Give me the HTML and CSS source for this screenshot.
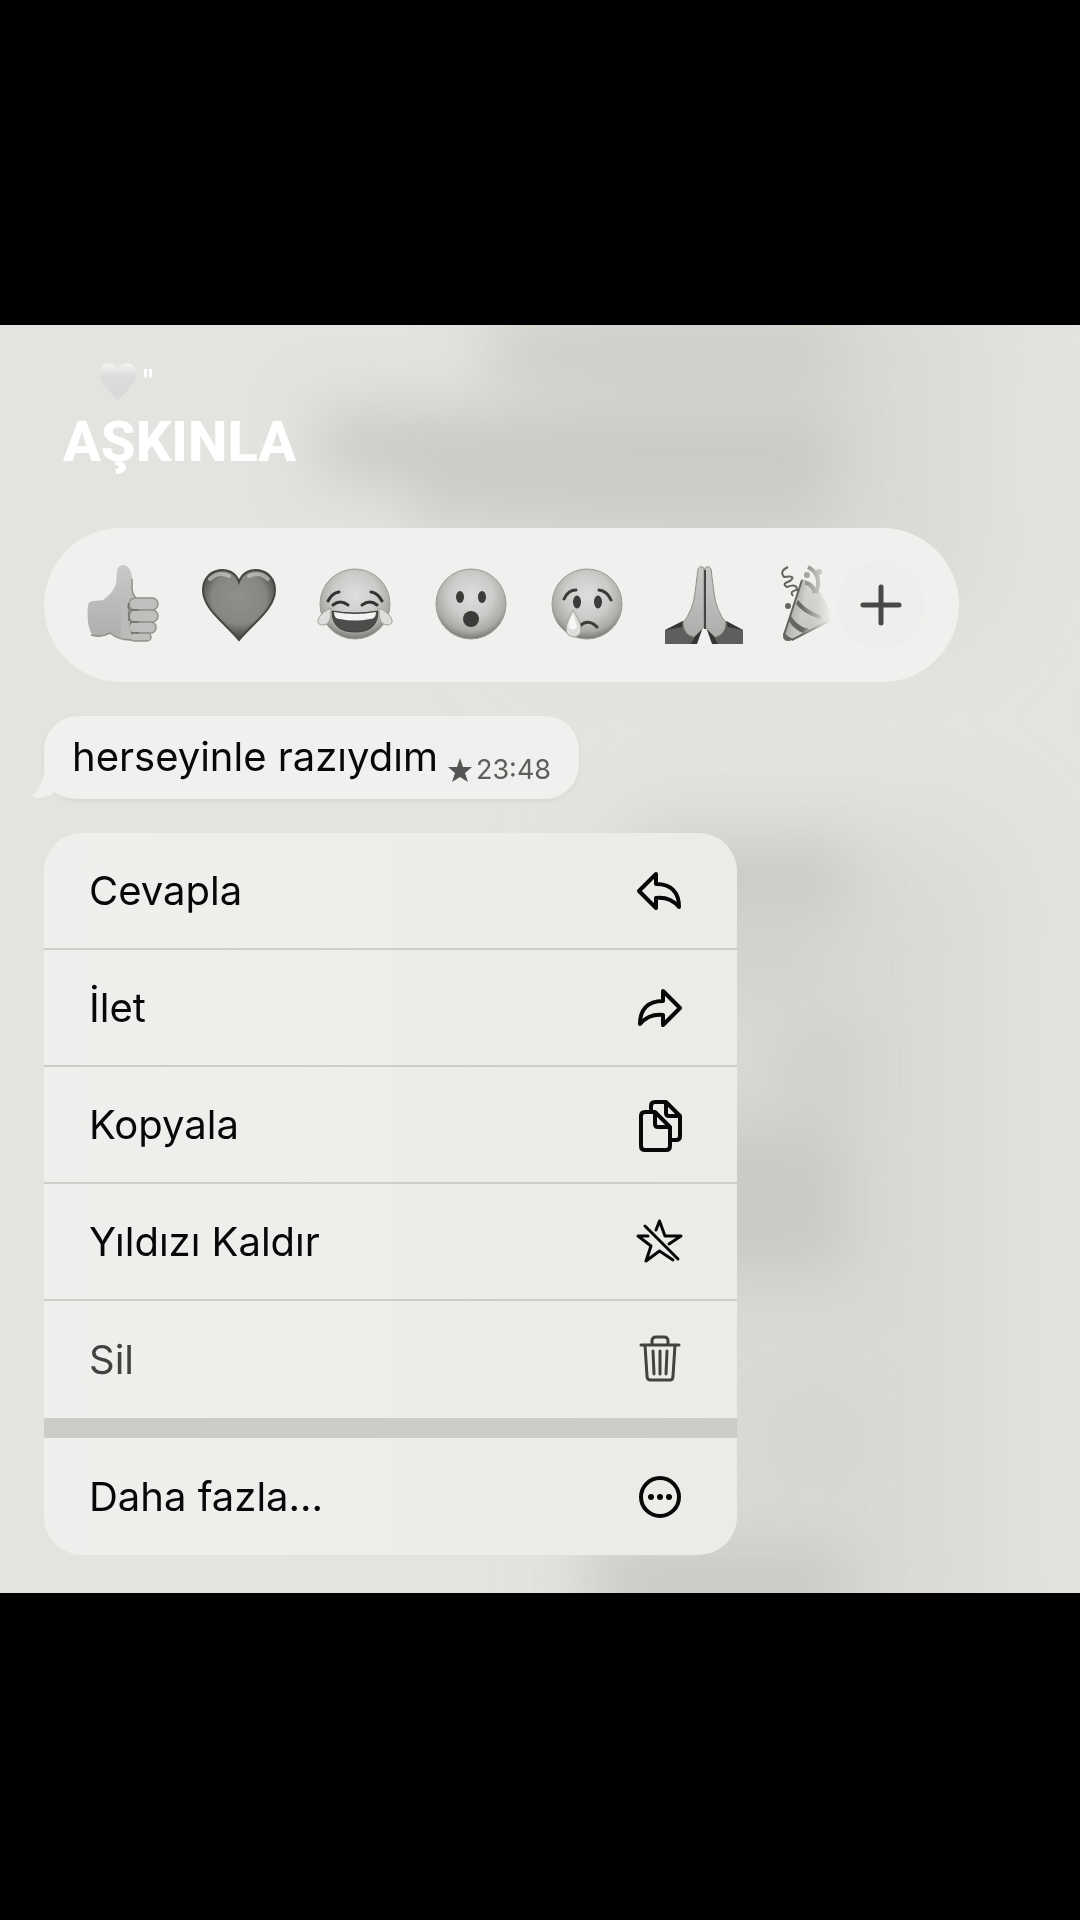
FILE: index.html
```html
<!DOCTYPE html>
<html lang="tr">
<head>
    <meta charset="UTF-8">
    <meta name="viewport" content="width=device-width, initial-scale=1.0">
    <title>AŞKINLA</title>
    <link rel="stylesheet" href="styles.css">
</head>
<body>
    <main class="stage">
        <!-- Blurred chat behind the menu -->
        <svg class="backdrop" viewBox="0 0 1080 1268" preserveAspectRatio="none" aria-hidden="true">
            <defs>
                <filter id="soft" x="-50%" y="-50%" width="200%" height="200%"><feGaussianBlur stdDeviation="30"/></filter>
                <filter id="wide" x="-50%" y="-50%" width="200%" height="200%"><feGaussianBlur stdDeviation="55"/></filter>
            </defs>
            <g filter="url(#wide)" fill="#d9dad5">
                <rect x="540" y="-60" width="440" height="360"/>
                <rect x="620" y="500" width="380" height="860"/>
            </g>
            <g filter="url(#soft)" fill="#c9cac4">
                <rect x="490" y="0" width="350" height="50"/>
                <rect x="320" y="85" width="520" height="70"/>
                <rect x="410" y="150" width="420" height="60" opacity="0.8"/>
                <rect x="640" y="520" width="210" height="70"/>
                <rect x="640" y="620" width="190" height="40" opacity="0.7"/>
                <rect x="780" y="700" width="80" height="80" opacity="0.7"/>
                <rect x="640" y="800" width="210" height="150"/>
                <rect x="780" y="1080" width="70" height="70" opacity="0.4"/>
                <rect x="590" y="1220" width="260" height="80"/>
            </g>
        </svg>

        <div class="caption">
            <div class="caption-quote">
                <svg class="caption-heart" viewBox="0 0 40 40" aria-hidden="true">
                    <defs>
                        <linearGradient id="pale" x1="0" y1="0" x2="0" y2="1">
                            <stop offset="0" stop-color="#f4f4f3"/>
                            <stop offset="0.35" stop-color="#dcdcdc"/>
                            <stop offset="1" stop-color="#d9d9d9"/>
                        </linearGradient>
                    </defs>
                    <path fill="url(#pale)" d="M20 39 C11 30 2 23 2 12 C2 1 15 -1 20 8 C25 -1 38 1 38 12 C38 23 29 30 20 39 Z"/>
                </svg>
                <span>"</span>
            </div>
            <h1 class="caption-title">AŞKINLA</h1>
        </div>

        <div class="reactions">
            <div class="reaction-list">
                <button class="reaction" aria-label="Beğen">
                    <svg viewBox="0 0 80 80">
                        <defs>
                            <linearGradient id="skin" x1="0" y1="0" x2="0" y2="1">
                                <stop offset="0" stop-color="#c9cac8"/>
                                <stop offset="1" stop-color="#adaeab"/>
                            </linearGradient>
                        </defs>
                        <path fill="url(#skin)" d="M5 40 Q6 36 11 36 L20 35 Q30 28 33 19 L34 6 Q35 0 41 0 Q48 2 49 12 L49 22 Q49 28 52 33 L50 75 Q38 76 27 68 Q20 71 10 71 Q3 62 5 40 Z"/>
                        <path fill="none" stroke="#8e8f8b" stroke-width="1.5" d="M49 14 V22 Q49 29 53 33 M8 70 Q18 73 27 68 Q37 76 50 75"/>
                        <g fill="#bfc0bd" stroke="#90918d" stroke-width="1.5">
                            <rect x="46" y="33" width="29" height="12" rx="6"/>
                            <rect x="46" y="45" width="29" height="12" rx="6"/>
                            <rect x="46" y="57" width="27" height="11" rx="5"/>
                            <rect x="47" y="68" width="21" height="8" rx="4"/>
                        </g>
                        <path fill="#bbbcb9" d="M38 35 L46 35 Q44 56 49 74 L38 73 Z"/>
                        <path fill="none" stroke="#70716d" stroke-width="1.5" d="M46 38 Q44 44 47 45 H56 M47 57 H56 M48 68 H56 M46 46 V56"/>
                    </svg>
                </button>
                <button class="reaction" aria-label="Kalp">
                    <svg viewBox="0 0 80 80">
                        <defs>
                            <radialGradient id="heart" cx="0.5" cy="0.4" r="0.62">
                                <stop offset="0" stop-color="#8f908c"/>
                                <stop offset="0.6" stop-color="#868783"/>
                                <stop offset="1" stop-color="#383936"/>
                            </radialGradient>
                        </defs>
                        <path fill="url(#heart)" stroke="#454643" stroke-width="2" d="M40 75 C26 58 4 44 4 25 C4 2 34 -2 40 17 C46 -2 76 2 76 25 C76 44 54 58 40 75 Z"/>
                        <path fill="none" stroke="#d3d4d1" stroke-width="4" stroke-linecap="round" opacity="0.6" d="M11 14 Q20 6 30 11 M50 11 Q60 6 69 14"/>
                    </svg>
                </button>
                <button class="reaction" aria-label="Kahkaha">
                    <svg viewBox="0 0 80 80">
                        <defs>
                            <radialGradient id="face" cx="0.5" cy="0.38" r="0.64">
                                <stop offset="0" stop-color="#dededc"/>
                                <stop offset="0.5" stop-color="#cbccc9"/>
                                <stop offset="0.8" stop-color="#aaaba7"/>
                                <stop offset="1" stop-color="#6e6f6b"/>
                            </radialGradient>
                        </defs>
                        <circle cx="40" cy="39" r="35" fill="url(#face)" stroke="#9a9b97"/>
                        <path fill="#4d4e4b" stroke="#3c3d3a" d="M17 46 Q40 50 63 46 Q63 67 40 67 Q17 67 17 46 Z"/>
                        <path fill="#f3f3f1" d="M19 47 Q40 51 61 47 Q61 54 55 54 Q40 57 25 54 Q19 54 19 47 Z"/>
                        <g fill="none" stroke="#333431" stroke-width="3" stroke-linecap="round">
                            <path d="M18 40 Q25 34 33 40 M47 40 Q55 34 62 40"/>
                            <path d="M13 36 Q17 28 24 27 M56 27 Q63 28 67 36"/>
                        </g>
                        <path fill="#dededc" stroke="#a0a19d" d="M16 43 Q17 60 8 60 Q2 60 3 55 Q5 48 16 43 Z M64 43 Q63 60 72 60 Q78 60 77 55 Q75 48 64 43 Z"/>
                    </svg>
                </button>
                <button class="reaction" aria-label="Şaşkın">
                    <svg viewBox="0 0 80 80">
                        <circle cx="40" cy="39" r="35" fill="url(#face)" stroke="#989995"/>
                        <g fill="#3b3c39">
                            <ellipse cx="29" cy="32" rx="4" ry="6"/>
                            <ellipse cx="51" cy="32" rx="4" ry="6"/>
                            <circle cx="40" cy="54" r="8"/>
                        </g>
                    </svg>
                </button>
                <button class="reaction" aria-label="Üzgün">
                    <svg viewBox="0 0 80 80">
                        <circle cx="40" cy="39" r="35" fill="url(#face)" stroke="#989995"/>
                        <g fill="#3b3c39">
                            <ellipse cx="30" cy="37" rx="4" ry="6.5"/>
                            <ellipse cx="51" cy="37" rx="4" ry="6.5"/>
                        </g>
                        <path fill="none" stroke="#3b3c39" stroke-width="3" stroke-linecap="round" d="M17 34 Q21 25 29 25 M52 25 Q60 26 64 35 M33 61 Q41 53 50 62"/>
                        <path fill="#dededc" stroke="#a0a19d" d="M26 45 Q19 58 19 64 Q19 71 27 72 Q34 71 34 64 Q34 58 26 45 Z"/>
                        <path fill="#f7f7f6" d="M26 48 Q20 60 22 63 Q26 67 30 62 Z"/>
                    </svg>
                </button>
                <button class="reaction" aria-label="Dua">
                    <svg viewBox="0 0 80 80">
                        <path fill="#5e5f5c" d="M2 65 L20 56 L34 70 L30 79 H2 Z M80 65 L63 56 L49 70 L54 79 H80 Z"/>
                        <path fill="#353633" d="M20 56 L2 65 L19 62 Z M63 56 L80 65 L65 62 Z M34 68 L40 62 L34 79 H28 Z M49 68 L43 62 L49 79 H55 Z"/>
                        <path fill="url(#skin)" stroke="#8d8e8a" d="M35 4 Q37 0 41 3 L41 62 L31 72 Q21 70 20 58 Q30 45 32 28 Z"/>
                        <path fill="url(#skin)" stroke="#8d8e8a" d="M48 4 Q46 0 42 3 L42 62 L52 72 Q62 70 63 58 Q53 45 51 28 Z"/>
                        <path stroke="#454643" stroke-width="2" d="M42 5 V64"/>
                    </svg>
                </button>
                <button class="reaction" aria-label="Kutlama">
                    <svg viewBox="0 0 80 80">
                        <defs>
                            <linearGradient id="cone" x1="0" y1="0" x2="1" y2="0.3">
                                <stop offset="0" stop-color="#8b8c88"/>
                                <stop offset="0.5" stop-color="#cbccc9"/>
                                <stop offset="1" stop-color="#9a9b97"/>
                            </linearGradient>
                        </defs>
                        <path fill="url(#cone)" d="M23 14 Q40 16 54 54 L12 76 Q4 77 4 70 Z"/>
                        <path fill="#656663" d="M19 35 Q28 46 41 50 L42 54 Q26 50 17 39 Z M12 51 Q18 61 30 64 L24 68 Q14 64 10 56 Z M5 67 Q8 72 15 74 Q6 79 4 72 Z"/>
                        <path fill="none" stroke="#63645f" stroke-width="2" d="M9 2 Q0 6 5 12 Q18 10 11 16 Q2 19 8 22 Q18 18 18 25 Q10 26 14 31 M13 75 L50 56 M23 15 L5 70"/>
                        <path fill="none" stroke="#7c7d79" stroke-width="4" d="M29 2 Q44 10 37 28 M26 18 Q33 18 36 28"/>
                        <circle cx="9" cy="41" r="3" fill="#656663"/>
                        <circle cx="40" cy="7" r="3" fill="#868783"/>
                        <circle cx="28" cy="10" r="3" fill="#90918d"/>
                    </svg>
                </button>
            </div>
            <button class="reaction-more" aria-label="Diğer ifadeler">
                <svg viewBox="0 0 44 44"><path d="M22 4 V40 M4 22 H40"/></svg>
            </button>
        </div>

        <div class="message">
            <svg class="message-tail" viewBox="0 0 40 40" aria-hidden="true">
                <path d="M13 0 Q14 26 0 36 Q2 40 12 38 Q20 36 23 33 Q30 39 40 39 L40 0 Z"/>
            </svg>
            <p class="message-text">herseyinle razıydım</p>
            <div class="message-meta">
                <svg class="message-star" viewBox="0 0 24 24" aria-hidden="true">
                    <path d="M12 0 L15 9 L24 9 L17 15 L20 24 L12 19 L4 24 L7 15 L0 9 L9 9 Z"/>
                </svg>
                <time>23:48</time>
            </div>
        </div>

        <div class="menu">
            <button class="menu-item">
                <span>Cevapla</span>
                <svg class="icon" viewBox="0 0 48 48"><path d="M20 7 L3 24 L20 41 V31 C30 30 37 33 43 40 C43 26 36 17 20 17 Z"/></svg>
            </button>
            <button class="menu-item">
                <span>İlet</span>
                <svg class="icon" viewBox="0 0 48 48"><path d="M27 7 L44 24 L27 41 V31 C17 30 10 33 4 40 C4 26 11 17 27 17 Z"/></svg>
            </button>
            <button class="menu-item">
                <span>Kopyala</span>
                <svg class="icon" viewBox="0 0 48 48">
                    <path d="M19 11 H9 Q5 11 5 15 V45 Q5 49 9 49 H30 Q34 49 34 45 V26 Z M19 11 V23 Q19 26 22 26 H34"/>
                    <path d="M15 11 V5 Q15 1 19 1 H30 L44 15 V35 Q44 39 40 39 H35 M30 1 V12 Q30 15 33 15 H44"/>
                </svg>
            </button>
            <button class="menu-item">
                <span>Yıldızı Kaldır</span>
                <svg class="icon icon-thin" viewBox="0 0 48 48">
                    <path d="M20 12 L23.5 3 L29 18 H45 L33 26 M12 18 H2 L15 28 L10 43 L23.5 33 L37 42 M9 8 L42 41"/>
                </svg>
            </button>
            <button class="menu-item menu-item-delete">
                <span>Sil</span>
                <svg class="icon icon-thin" viewBox="0 0 48 48">
                    <path d="M5 9 H43 M16 9 V5 Q16 1 20 1 H28 Q32 1 32 5 V9 M9 9 L11 40 Q11 44 15 44 H34 Q37 44 37 40 L39 9 M17 15 L18 38 M24 15 V38 M31 15 L30 38"/>
                </svg>
            </button>
            <div class="menu-gap"></div>
            <button class="menu-item">
                <span>Daha fazla...</span>
                <svg class="icon" viewBox="0 0 48 48">
                    <circle cx="24" cy="24" r="19"/>
                    <g class="icon-dots"><circle cx="15" cy="24" r="3"/><circle cx="24" cy="24" r="3"/><circle cx="33" cy="24" r="3"/></g>
                </svg>
            </button>
        </div>
    </main>
</body>
</html>
```
FILE: styles.css
```css
* { margin: 0; padding: 0; box-sizing: border-box; }
body {
    font-family: Inter, "Liberation Sans", sans-serif;
    background: #000;
    color: #080808;
    min-height: 100vh;
    padding-bottom: 2px;
    display: flex;
    align-items: center;
}
button { font: inherit; color: inherit; background: none; border: none; cursor: pointer; }
svg { display: block; overflow: visible; }

.stage {
    position: relative;
    isolation: isolate;
    width: 100%;
    padding: 36px 44px 38px;
    background: #e3e4df;
}
.backdrop {
    position: absolute;
    inset: 0;
    z-index: -1;
    width: 100%;
    height: 100%;
    overflow: hidden;
}

.caption { margin-bottom: 45px; padding-left: 19px; color: #fff; font-family: Roboto, sans-serif; }
.caption-quote { display: flex; align-items: center; gap: 5px; height: 40px; padding-left: 35px; font-size: 32px; font-weight: 700; }
.caption-heart { width: 40px; height: 40px; }
.caption-title { font-size: 56px; font-weight: 800; line-height: 82px; }

/* Reaction bar */
.reactions {
    display: flex;
    align-items: center;
    gap: 6px;
    max-width: 915px;
    height: 154px;
    margin-bottom: 34px;
    padding: 0 34px 0 39px;
    border-radius: 77px;
    background: #f0f0ee;
}
.reaction-list {
    display: flex;
    flex: 1;
    gap: 36px;
    min-width: 0;
    overflow: hidden;
    mask-image: linear-gradient(to left, transparent, #000 30px);
}
.reaction { flex: none; width: 80px; height: 80px; }
.reaction-more {
    display: flex;
    flex: none;
    align-items: center;
    justify-content: center;
    width: 88px;
    height: 88px;
    border-radius: 50%;
    background: #eeeeec;
}
.reaction-more svg { width: 44px; height: 44px; fill: none; stroke: #484946; stroke-width: 5; stroke-linecap: round; }

/* Message bubble */
.message {
    position: relative;
    display: flex;
    width: fit-content;
    gap: 10px;
    height: 83px;
    margin-bottom: 34px;
    padding: 0 28px;
    border-radius: 34px;
    background: #f0f0ee;
    box-shadow: 0 2px 5px rgba(0, 0, 0, 0.06);
}
.message-tail { position: absolute; left: -12px; bottom: 0; width: 40px; height: 40px; fill: #f0f0ee; }
.message-text { position: relative; font-size: 40px; line-height: 82px; }
.message-meta { display: flex; align-items: center; gap: 4px; padding-top: 24px; color: #5e5f5c; font-size: 27px; }
.message-star { width: 24px; height: 24px; fill: #555653; }

/* Context menu */
.menu { max-width: 693px; border-radius: 38px; overflow: hidden; background: linear-gradient(to right, #efefed, #ebece8); }
.menu-item {
    display: flex;
    align-items: center;
    justify-content: space-between;
    width: 100%;
    height: 117px;
    padding: 0 53px 0 45px;
    border-bottom: 2px solid #cdceca;
    font-size: 40px;
}
.menu-item-delete { color: #424340; }
.menu-item-delete, .menu-item:last-child { border-bottom: none; }
.menu-gap { height: 20px; background: #cbccc7; }

.icon { width: 48px; height: 48px; fill: none; stroke: currentColor; stroke-width: 4; stroke-linejoin: round; stroke-linecap: round; }
.icon-thin { stroke-width: 3; }
.icon-dots { fill: currentColor; stroke: none; }
```
